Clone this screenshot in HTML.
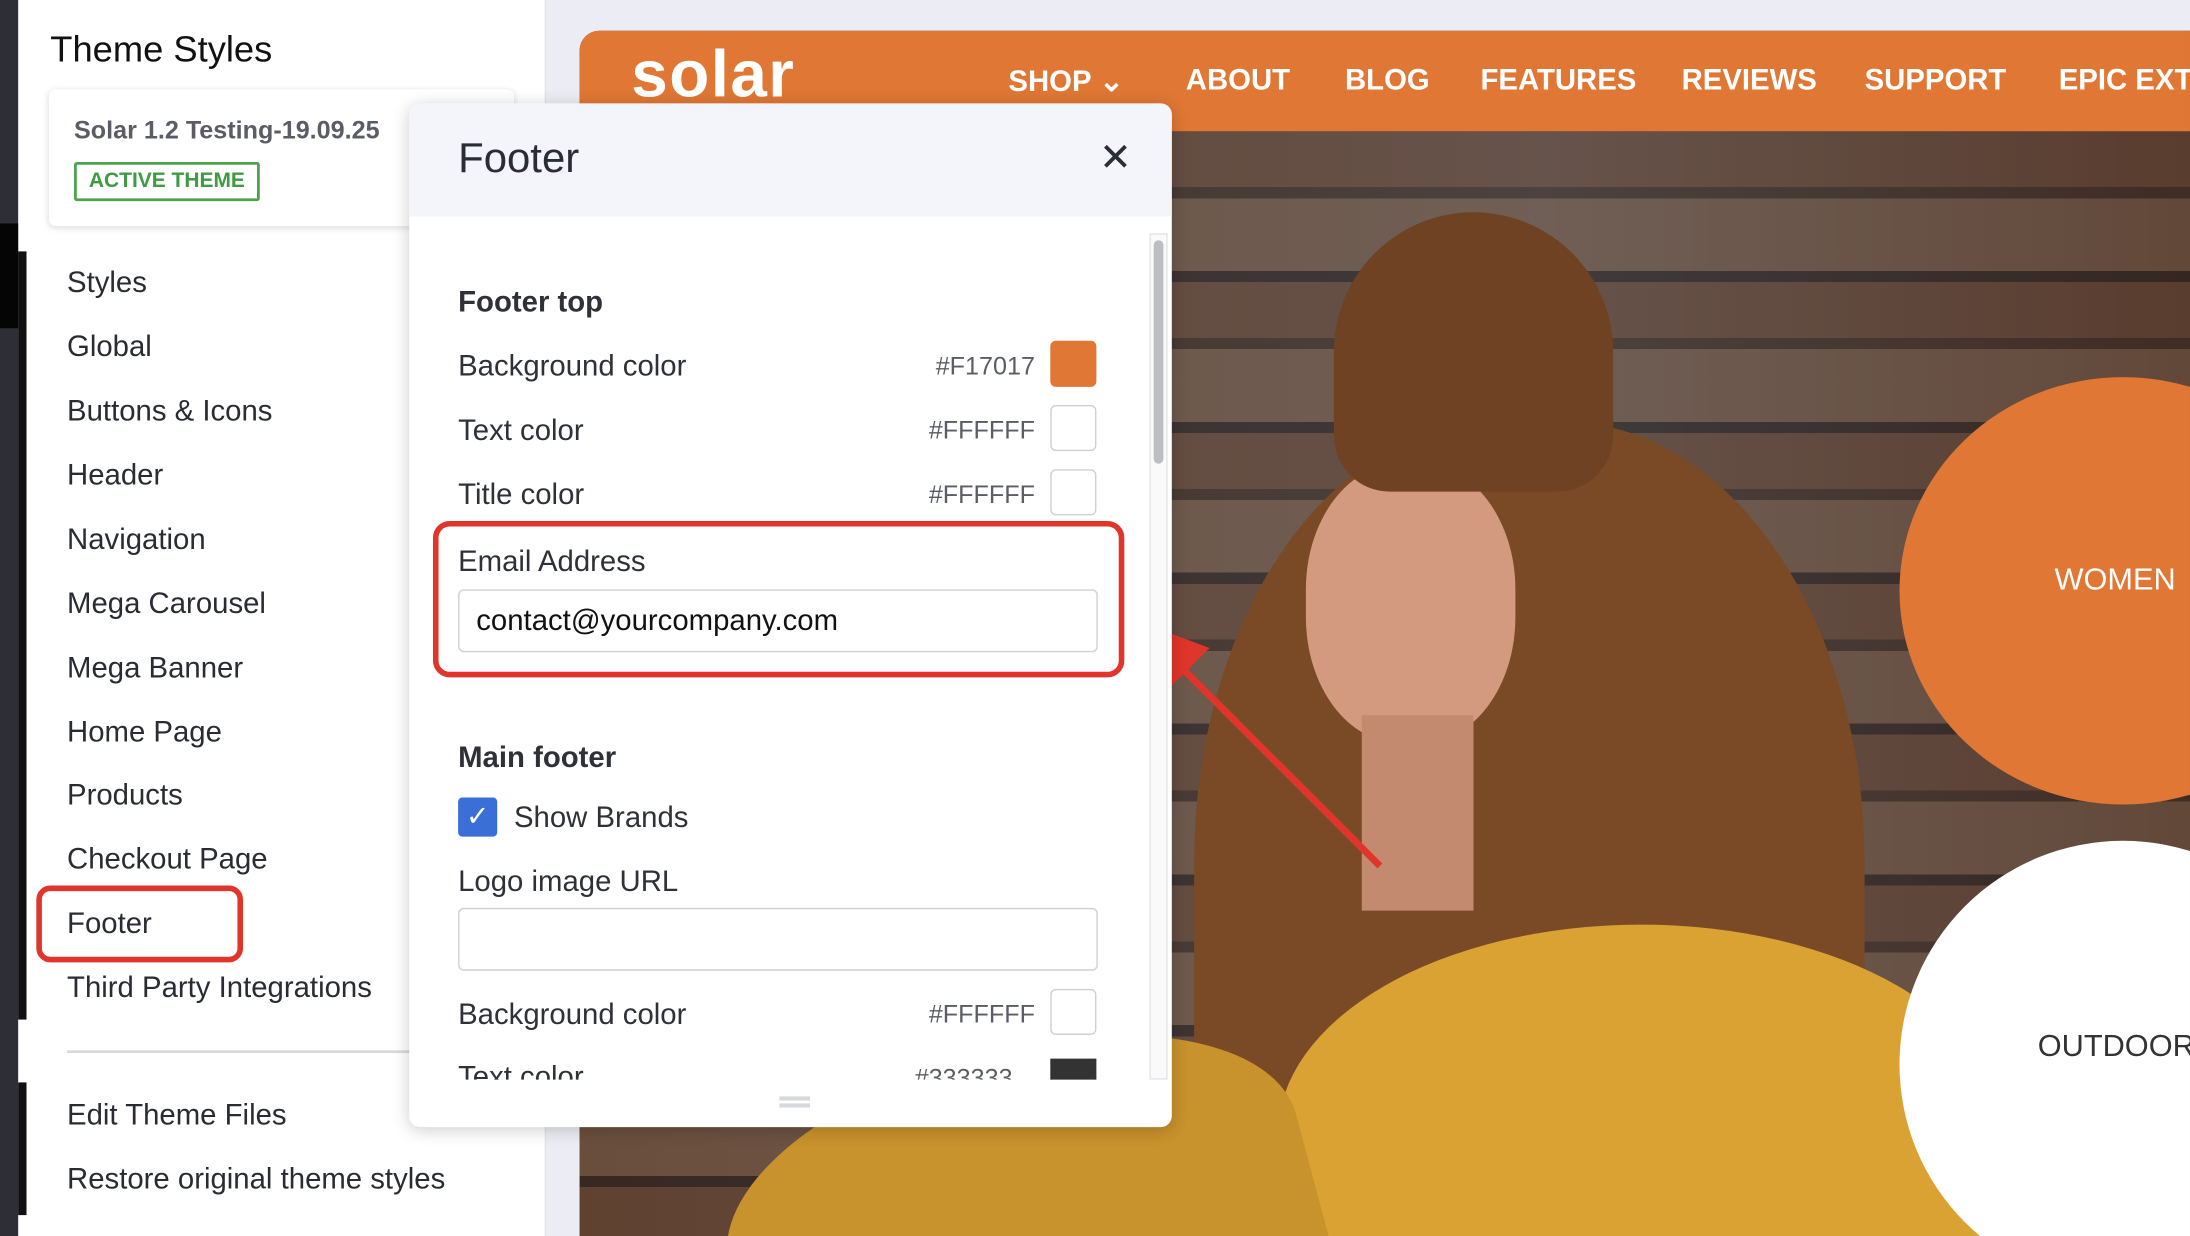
<!DOCTYPE html>
<html><head><meta charset="utf-8"><style>
*{box-sizing:border-box;margin:0;padding:0}
html,body{width:2190px;height:1236px;overflow:hidden;background:#fff}
#w{width:1568px;height:885px;transform:scale(1.39668);transform-origin:0 0;position:relative;font-family:"Liberation Sans",sans-serif;overflow:hidden}
.a{position:absolute}
.nav{font-size:21px;color:#2a2c33;left:48px}
.lbl{font-size:21px;color:#2f3138;left:35px;position:absolute}
.hex{font-size:18px;color:#5b5d66;position:absolute;right:98px}
.sw{position:absolute;left:459px;width:33px;height:33px;border:1px solid #cfd0d6;border-radius:4px}
</style></head><body><div id="w">
<div class="a" style="left:0;top:0;width:13px;height:885px;background:#2e2f36"></div>
<div class="a" style="left:0;top:160px;width:13px;height:75px;background:#050505"></div>
<div class="a" style="left:13px;top:180px;width:6px;height:550px;background:#111"></div>
<div class="a" style="left:13px;top:775px;width:6px;height:95px;background:#111"></div>
<div class="a" style="left:19px;top:0;width:372px;height:885px;background:#fff;border-right:1px solid #e1e2ea"></div>
<div class="a" style="left:391px;top:0;width:1177px;height:885px;background:#ecedf4"></div>
<div class="a" style="left:36px;top:20px;font-size:26px;color:#111">Theme Styles</div>
<div class="a" style="left:35px;top:64px;width:333px;height:98px;background:#fff;border-radius:5px;box-shadow:0 1px 5px rgba(0,0,0,.15)"></div>
<div class="a" style="left:53px;top:83px;font-size:18px;font-weight:bold;color:#5a5c66">Solar 1.2 Testing-19.09.25</div>
<div class="a" style="left:53px;top:116px;width:133px;height:28px;border:2px solid #4ea24e;border-radius:2px;color:#3f9a42;font-size:15px;font-weight:bold;text-align:center;line-height:24px">ACTIVE THEME</div>
<div class="a nav" style="top:191px">Styles</div>
<div class="a nav" style="top:237px">Global</div>
<div class="a nav" style="top:283px">Buttons &amp; Icons</div>
<div class="a nav" style="top:329px">Header</div>
<div class="a nav" style="top:375px">Navigation</div>
<div class="a nav" style="top:421px">Mega Carousel</div>
<div class="a nav" style="top:467px">Mega Banner</div>
<div class="a nav" style="top:513px">Home Page</div>
<div class="a nav" style="top:558px">Products</div>
<div class="a nav" style="top:604px">Checkout Page</div>
<div class="a nav" style="top:650px">Footer</div>
<div class="a" style="left:26px;top:634px;width:148px;height:55px;border:4px solid #e0352b;border-radius:10px"></div>
<div class="a nav" style="top:696px">Third Party Integrations</div>
<div class="a" style="left:48px;top:752px;width:250px;height:2px;background:#d8d9de"></div>
<div class="a nav" style="top:787px">Edit Theme Files</div>
<div class="a nav" style="top:833px">Restore original theme styles</div>
<!-- preview -->
<div class="a" style="left:415px;top:22px;width:1153px;height:863px;border-radius:14px 0 0 0;overflow:hidden;background:#5a3a28">
 <div class="a" style="left:0;top:72px;width:1153px;height:800px;background:repeating-linear-gradient(180deg,#6e4a35 0 40px,#4a3326 40px 48px,#7b5a44 48px 100px,#3b2a22 100px 108px);"></div>
 <div class="a" style="left:0;top:72px;width:1153px;height:800px;background:linear-gradient(90deg,rgba(40,30,30,.2),rgba(80,110,140,.25) 60%,rgba(40,30,30,.3))"></div>
 <div class="a" style="left:0;top:0;width:1153px;height:72px;background:#e07734"></div>
 <div class="a" style="left:37px;top:3px;font-size:47px;font-weight:bold;color:#fff;letter-spacing:1px">solar</div>
 <div class="a" style="left:307px;top:24px;font-size:21px;font-weight:bold;color:#fff">SHOP ⌄</div>
 <div class="a" style="left:434px;top:24px;font-size:21px;font-weight:bold;color:#fff">ABOUT</div>
 <div class="a" style="left:548px;top:24px;font-size:21px;font-weight:bold;color:#fff">BLOG</div>
 <div class="a" style="left:645px;top:24px;font-size:21px;font-weight:bold;color:#fff">FEATURES</div>
 <div class="a" style="left:789px;top:24px;font-size:21px;font-weight:bold;color:#fff">REVIEWS</div>
 <div class="a" style="left:920px;top:24px;font-size:21px;font-weight:bold;color:#fff">SUPPORT</div>
 <div class="a" style="left:1059px;top:24px;font-size:21px;font-weight:bold;color:#fff;white-space:nowrap">EPIC EXTRAS</div>
 <!-- woman -->
 <div class="a" style="left:440px;top:280px;width:480px;height:700px;border-radius:45% 45% 10% 10%;background:#7a4a26"></div>
 <div class="a" style="left:500px;top:640px;width:520px;height:300px;border-radius:50% 50% 0 0;background:#d9a232"></div>
 <div class="a" style="left:100px;top:730px;width:420px;height:200px;border-radius:60% 60% 0 0;background:#c8922c;transform:rotate(-15deg)"></div>
 <div class="a" style="left:520px;top:310px;width:150px;height:200px;border-radius:45%;background:#d49a80"></div>
 <div class="a" style="left:560px;top:490px;width:80px;height:140px;background:#c48a6f"></div>
 <div class="a" style="left:540px;top:130px;width:200px;height:200px;border-radius:50% 50% 20% 20%;background:#6e4223"></div>
 <div class="a" style="left:945px;top:248px;width:320px;height:306px;border-radius:50%;background:#e07734"></div>
 <div class="a" style="left:1056px;top:380px;font-size:22px;color:#fff">WOMEN</div>
 <div class="a" style="left:945px;top:580px;width:320px;height:320px;border-radius:50%;background:#fff"></div>
 <div class="a" style="left:1044px;top:714px;font-size:22px;color:#333">OUTDOOR</div>
</div>
<!-- arrow -->
<svg class="a" style="left:810px;top:440px" width="200" height="200"><line x1="178" y1="180" x2="30" y2="32" stroke="#e0352b" stroke-width="5"/><polygon points="8,6 56,24 24,56" fill="#e0352b"/></svg>
<!-- modal -->
<div class="a" style="left:293px;top:74px;width:546px;height:733px;background:#fff;border-radius:8px;box-shadow:0 2px 12px rgba(0,0,0,.2);overflow:hidden">
 <div class="a" style="left:0;top:0;width:546px;height:81px;background:#f4f5fa"></div>
 <div class="a" style="left:35px;top:23px;font-size:30px;color:#2b2d35">Footer</div>
 <div class="a" style="left:494px;top:22px;font-size:28px;color:#2b2d35">✕</div>
 <div class="a" style="left:530px;top:93px;width:13px;height:606px;border:1px solid #e3e4e8;background:#fafafa"></div>
 <div class="a" style="left:533px;top:98px;width:7px;height:160px;border-radius:4px;background:#bdbec3"></div>
 <div class="lbl" style="top:131px;font-weight:bold">Footer top</div>
 <div class="lbl" style="top:177px">Background color</div><div class="hex" style="top:178px">#F17017</div><div class="sw" style="top:170px;background:#e07734;border-color:#e07734"></div>
 <div class="lbl" style="top:223px">Text color</div><div class="hex" style="top:224px">#FFFFFF</div><div class="sw" style="top:216px"></div>
 <div class="lbl" style="top:269px">Title color</div><div class="hex" style="top:270px">#FFFFFF</div><div class="sw" style="top:262px"></div>
 <div class="a" style="left:17px;top:299px;width:495px;height:112px;border:4px solid #e0352b;border-radius:12px"></div>
 <div class="lbl" style="top:317px">Email Address</div>
 <div class="a" style="left:35px;top:348px;width:458px;height:45px;border:1px solid #cfd0d6;border-radius:4px;padding-left:12px;line-height:43px;font-size:21px;color:#111">contact@yourcompany.com</div>
 <div class="lbl" style="top:457px;font-weight:bold">Main footer</div>
 <div class="a" style="left:35px;top:497px;width:28px;height:28px;background:#3a6fd8;border-radius:3px;color:#fff;font-size:20px;text-align:center;line-height:28px">✓</div>
 <div class="lbl" style="top:500px;left:75px">Show Brands</div>
 <div class="lbl" style="top:546px">Logo image URL</div>
 <div class="a" style="left:35px;top:576px;width:458px;height:45px;border:1px solid #cfd0d6;border-radius:4px"></div>
 <div class="lbl" style="top:641px">Background color</div><div class="hex" style="top:642px">#FFFFFF</div><div class="sw" style="top:634px"></div>
 <div class="a" style="left:0;top:684px;width:530px;height:15px;overflow:hidden"><div class="lbl" style="top:2px">Text color</div><div class="hex" style="top:4px;right:98px">#333333</div><div class="sw" style="top:-4px;background:#333;border-color:#333"></div></div>
 <div class="a" style="left:265px;top:711px;width:22px;height:3px;background:#d8d9de"></div>
 <div class="a" style="left:265px;top:716px;width:22px;height:3px;background:#d8d9de"></div>
</div>
</div></body></html>
